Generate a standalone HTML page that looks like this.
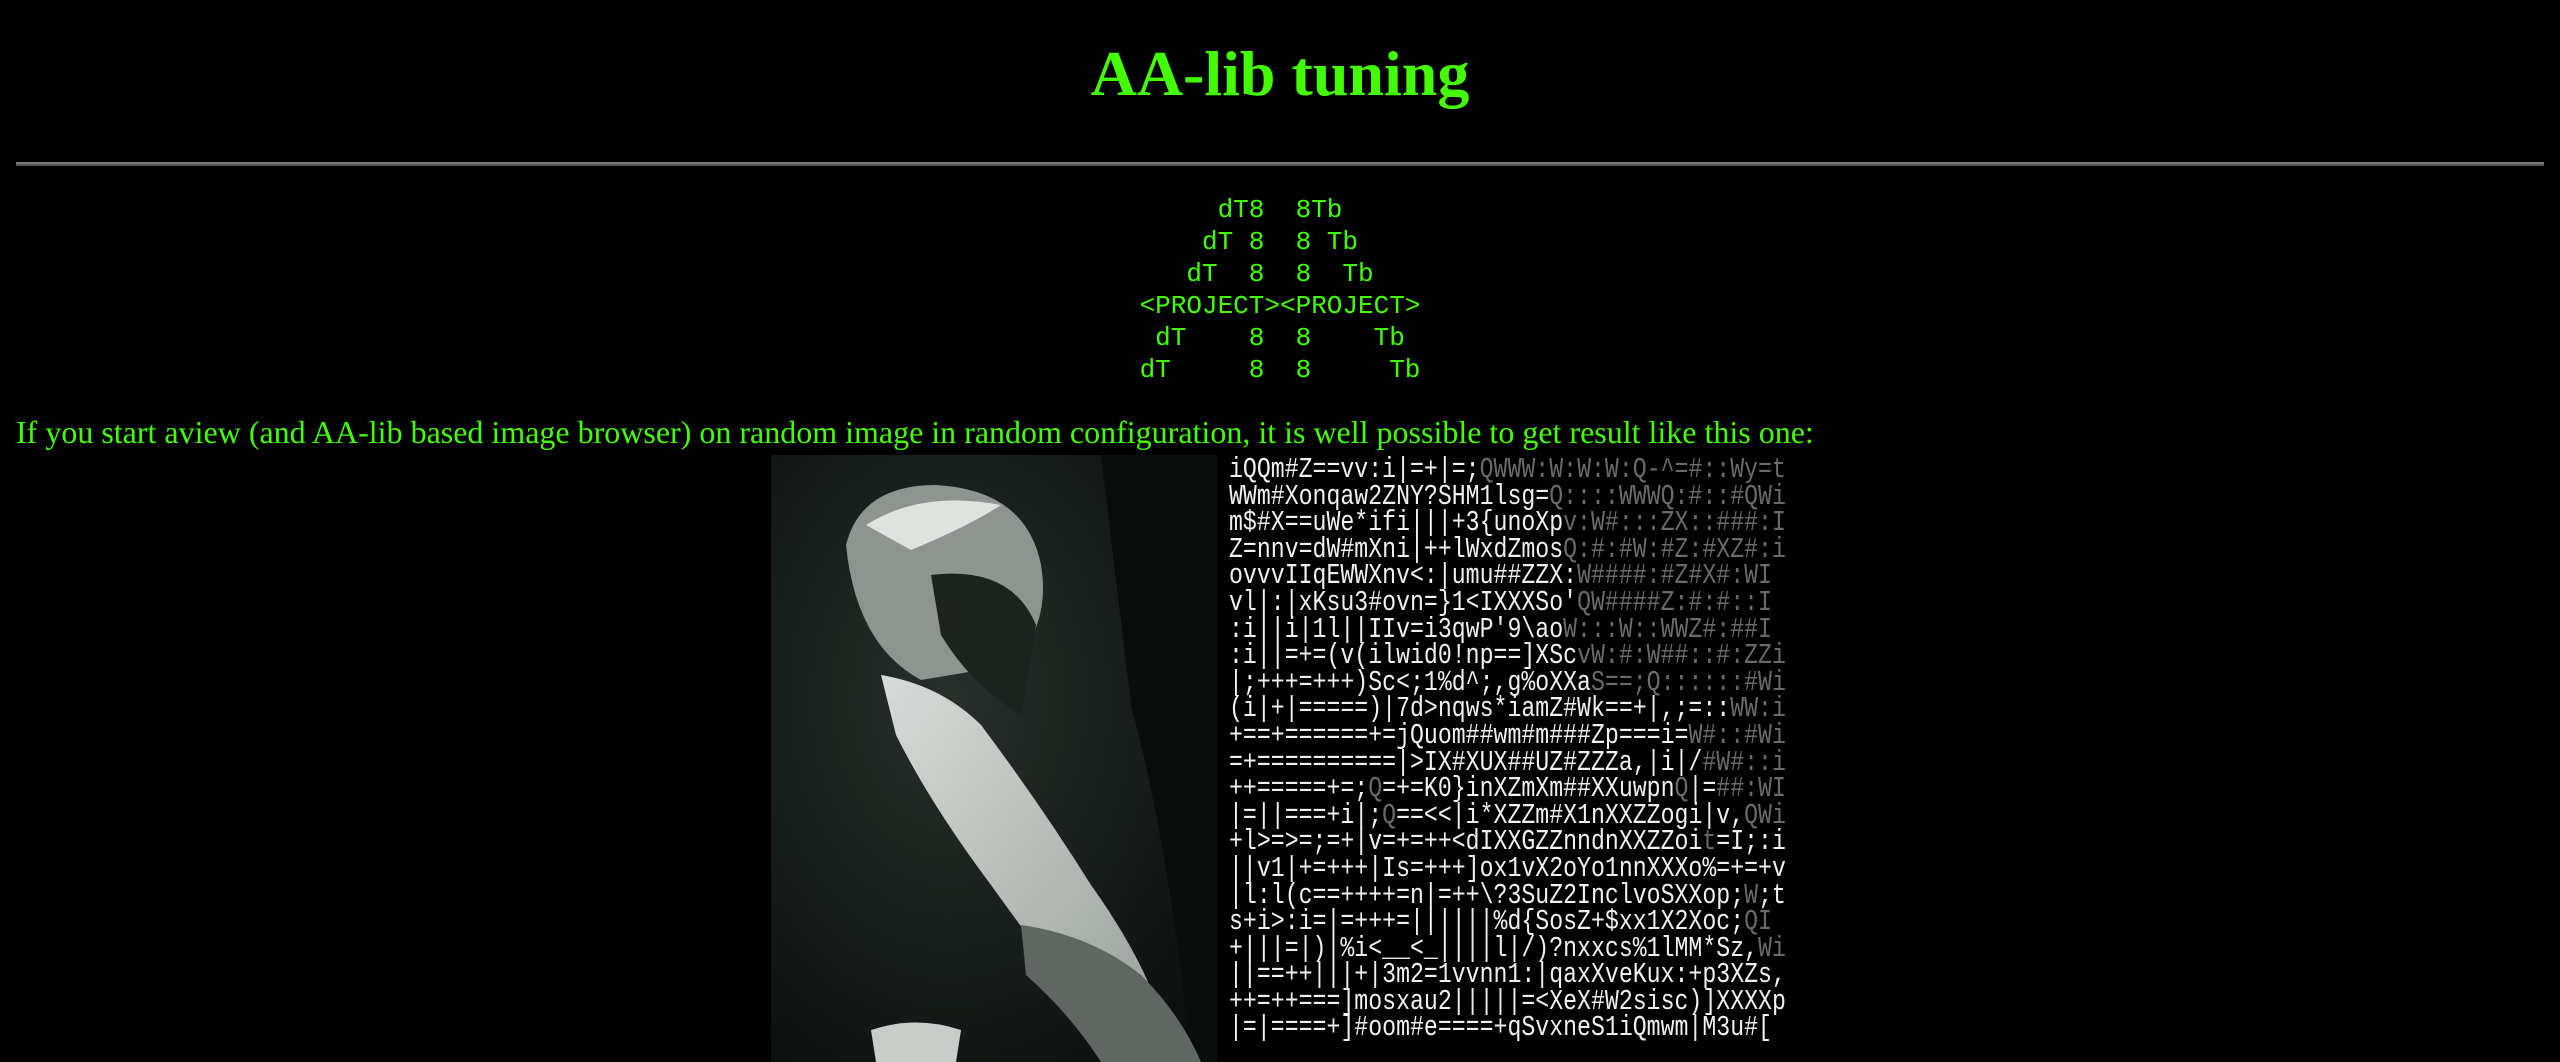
<!DOCTYPE html>
<html><head><meta charset="utf-8"><style>
html,body{margin:0;padding:0;background:#000;width:2560px;height:1062px;overflow:hidden}
body{position:relative;color:#44ff00;font-family:"Liberation Serif",serif}
h1{position:absolute;left:0;top:24px;width:2560px;margin:0;text-align:center;font-size:64px;line-height:100px;font-weight:bold}
.hr{position:absolute;left:16px;top:162px;width:2528px;height:2px;background:#777;border-bottom:2px solid #555}
pre.logo{position:absolute;left:0;top:194px;width:2560px;margin:0;text-align:center;font-family:"Liberation Mono",monospace;font-size:26px;line-height:32px;color:#44ff00}
p{position:absolute;left:16px;top:412px;margin:0;font-size:32px;line-height:40px;white-space:nowrap}
#photo{position:absolute;left:771px;top:455px;width:446px;height:607px}
#ascw{position:absolute;left:1217px;top:455px;width:575px;height:607px;overflow:hidden;background:#000}
#asc{position:absolute;left:12px;top:2px;margin:0;font-family:"Liberation Mono",monospace;font-size:29px;line-height:26.6px;color:#f0f0f0;white-space:pre;transform:scaleX(0.8);transform-origin:0 0}
#asc b{font-weight:normal;color:#6a6a6a}
</style></head><body>
<h1>AA-lib tuning</h1>
<div class="hr"></div>
<pre class="logo">  dT8  8Tb  
 dT 8  8 Tb 
dT  8  8  Tb
&lt;PROJECT&gt;&lt;PROJECT&gt;
dT    8  8    Tb
dT     8  8     Tb</pre>
<p>If you start aview (and AA-lib based image browser) on random image in random configuration, it is well possible to get result like this one:</p>
<svg id="photo" viewBox="0 0 446 607" xmlns="http://www.w3.org/2000/svg">
<defs>
<radialGradient id="bg" cx="0.4" cy="0.4" r="0.8"><stop offset="0" stop-color="#26302b"/><stop offset="1" stop-color="#0a0d0b"/></radialGradient>
<linearGradient id="beard" x1="0" y1="0" x2="1" y2="1"><stop offset="0" stop-color="#d8dcd9"/><stop offset="1" stop-color="#9aa19c"/></linearGradient>
</defs>
<rect width="446" height="607" fill="url(#bg)"/>
<path d="M330 0 L446 0 L446 607 L420 607 Q400 400 360 250 Z" fill="#0a0d0b"/>
<path d="M75 90 Q90 30 165 30 Q255 35 270 110 Q280 170 240 210 L150 225 Q85 190 75 90 Z" fill="#8e9590"/>
<path d="M95 70 Q150 35 230 50 Q200 70 140 95 Z" fill="#dfe3e0"/>
<path d="M160 120 Q240 110 265 170 L250 260 Q200 230 170 180 Z" fill="#1c221e"/>
<path d="M110 220 Q170 230 210 270 Q270 350 320 430 Q370 500 390 560 L330 575 Q270 500 220 430 Q160 350 125 280 Z" fill="url(#beard)"/>
<path d="M250 470 Q320 480 370 520 Q410 560 430 607 L330 607 Q300 560 255 520 Z" fill="#5f6762"/>
<path d="M100 575 Q145 560 190 575 L185 607 L105 607 Z" fill="#c9cdca"/>
</svg>
<div id="ascw"><pre id="asc">iQQm#Z==vv:i|=+|=;<b>QWWW:W:W:W:Q-^=#::Wy=t</b>
WWm#Xonqaw2ZNY?SHM1lsg=<b>Q::::WWWQ:#::#QWi</b>
m$#X==uWe*ifi|||+3{unoXp<b>v:W#:::ZX::###:I</b>
Z=nnv=dW#mXni|++lWxdZmos<b>Q:#:#W:#Z:#XZ#:i</b>
ovvvIIqEWWXnv&lt;:|umu##ZZX:<b>W####:#Z#X#:WI</b>
vl|:|xKsu3#ovn=}1&lt;IXXXSo'<b>QW####Z:#:#::I</b>
:i||i|1l||IIv=i3qwP'9\ao<b>W:::W::WWZ#:##I</b>
:i||=+=(v(ilwid0!np==]XSc<b>vW:#:W##::#:ZZi</b>
|;+++=+++)Sc&lt;;1%d^;,g%oXXa<b>S==;Q::::::#Wi</b>
(i|+|=====)|7d&gt;nqws*iamZ#Wk==+|,;=::<b>WW:i</b>
+==+======+=jQuom##wm#m###Zp===i=<b>W#::#Wi</b>
=+==========|&gt;IX#XUX##UZ#ZZZa,|i|/<b>#W#::i</b>
++=====+=;<b>Q</b>=+=K0}inXZmXm##XXuwpn<b>Q</b>|=<b>##:WI</b>
|=||===+i|;<b>Q</b>==&lt;&lt;|i*XZZm#X1nXXZZogi|v,<b>QWi</b>
+l&gt;=&gt;=;=+|v=+=++&lt;dIXXGZZnndnXXZZoi<b>t</b>=I;:i
||v1|+=+++|Is=+++]ox1vX2oYo1nnXXXo%=+=+v
|l:l(c==++++=n|=++\?3SuZ2InclvoSXXop;<b>W</b>;t
s+i&gt;:i=|=+++=||||||%d{SosZ+$xx1X2Xoc;<b>QI</b>
+|||=|)|%i&lt;__&lt;_||||l|/)?nxxcs%1lMM*Sz,<b>Wi</b>
||==++|||+|3m2=1vvnn1:|qaxXveKux:+p3XZs,
++=++===]mosxau2|||||=&lt;XeX#W2sisc)]XXXXp
|=|====+]#oom#e====+qSvxneS1iQmwm|M3u#[</pre></div>
</body></html>
